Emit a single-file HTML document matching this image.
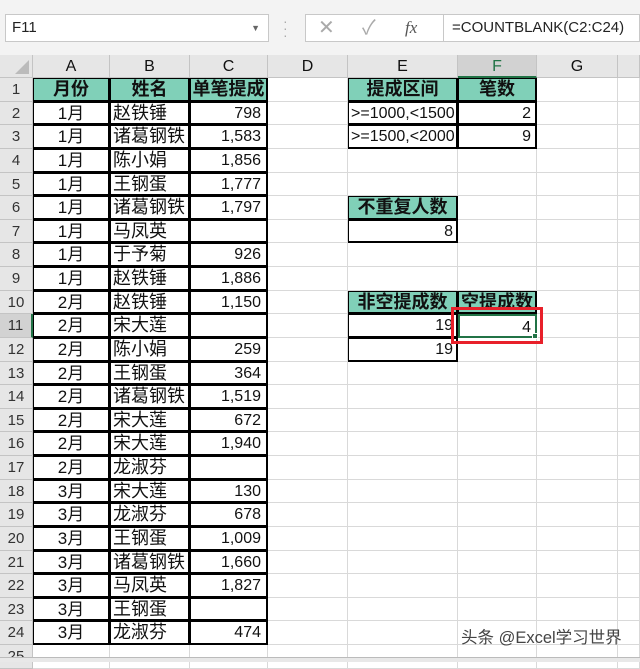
<!DOCTYPE html>
<html><head><meta charset="utf-8"><style>
*{box-sizing:border-box;margin:0;padding:0}
body{width:640px;height:662px;overflow:hidden;background:#fff;font-family:"Liberation Sans","Noto Sans CJK SC",sans-serif;position:relative}
.top{position:absolute;left:0;top:0;width:640px;height:55px;background:#f3f3f3}
.nb{position:absolute;left:5px;top:14px;width:264px;height:28px;background:#fff;border:1px solid #c8c8c8;font-size:15px;line-height:26px;padding-left:6px;color:#222}
.fb{position:absolute;left:305px;top:14px;width:330px;height:28px;background:#fff;border:1px solid #c8c8c8}
.fx{position:absolute;left:363px;top:14px;width:277px;height:28px;background:#fff;border:1px solid #c8c8c8;font-size:15px;line-height:26px;padding-left:8px;color:#222}
.r{position:absolute;left:0;height:23.625px;display:flex;width:640px}
.r>div{height:100%;border-right:1px solid #d9d9d9;border-bottom:1px solid #d9d9d9;font-size:16px;line-height:24px;white-space:nowrap;overflow:visible;color:#111}
.r>div:nth-child(1){width:33px;background:#e6e6e6;border-color:#c4c4c4;text-align:center;font-size:15px;color:#333}
.r>div:nth-child(2){width:77px;text-align:center;font-size:17px;line-height:23px}
.r>div:nth-child(3){width:80px;padding-left:3px;font-size:18px;line-height:23px}
.r>div:nth-child(4){width:78px;text-align:right;padding-right:6px}
.r>div:nth-child(5){width:80px}
.r>div:nth-child(6){width:110px;text-align:right;padding-right:4px}
.r>div:nth-child(7){width:79px;text-align:right;padding-right:5px}
.r>div:nth-child(8){width:81px}
.r>div:nth-child(9){width:22px}
.r>div.b{box-shadow:inset 0 0 0 1px #000;border-color:#000}
.r>div.h{background:#80d0b8;font-weight:bold;text-align:center;padding:0;font-size:18px;line-height:23px}
.r>div.l{text-align:left;padding-left:3px}
.ch>div{background:#e6e6e6;text-align:center!important;padding:0!important;font-size:16px!important;border-color:#c4c4c4}
</style></head><body>
<div class="top"></div>
<div class="nb">F11<span style="position:absolute;right:8px;top:0;font-size:9px;color:#666">▼</span></div>
<div style="position:absolute;left:283px;top:18px;color:#aaa;font-size:14px;line-height:7px">·<br>·<br>·</div>
<div class="fb"></div>
<div style="position:absolute;left:318px;top:14px;font-size:20px;color:#aaa;line-height:28px">✕</div>
<div style="position:absolute;left:362px;top:14px;font-size:20px;color:#aaa;line-height:28px">✓</div>
<div style="position:absolute;left:405px;top:14px;font-size:17px;color:#555;line-height:28px;font-family:'Liberation Serif',serif;font-style:italic">fx</div>
<div class="fx" style="left:443px;width:197px">=COUNTBLANK(C2:C24)</div>

<div class="r ch" style="top:55px;height:23px"><div style="position:relative"><span style="position:absolute;right:3px;bottom:3px;width:0;height:0;border-left:14px solid transparent;border-bottom:14px solid #bbb"></span></div><div>A</div><div>B</div><div>C</div><div>D</div><div>E</div><div style="background:#d2d2d2;border-bottom:2px solid #217346;color:#217346">F</div><div>G</div><div></div></div>

<div class="r" style="top:78px"><div>1</div><div class="b h">月份</div><div class="b h">姓名</div><div class="b h">单笔提成</div><div></div><div class="b h">提成区间</div><div class="b h">笔数</div><div></div><div></div></div>
<div class="r" style="top:101.6px"><div>2</div><div class="b">1月</div><div class="b">赵铁锤</div><div class="b">798</div><div></div><div class="b l">&gt;=1000,&lt;1500</div><div class="b">2</div><div></div><div></div></div>
<div class="r" style="top:125.25px"><div>3</div><div class="b">1月</div><div class="b">诸葛钢铁</div><div class="b">1,583</div><div></div><div class="b l">&gt;=1500,&lt;2000</div><div class="b">9</div><div></div><div></div></div>
<div class="r" style="top:148.9px"><div>4</div><div class="b">1月</div><div class="b">陈小娟</div><div class="b">1,856</div><div></div><div></div><div></div><div></div><div></div></div>
<div class="r" style="top:172.5px"><div>5</div><div class="b">1月</div><div class="b">王钢蛋</div><div class="b">1,777</div><div></div><div></div><div></div><div></div><div></div></div>
<div class="r" style="top:196.1px"><div>6</div><div class="b">1月</div><div class="b">诸葛钢铁</div><div class="b">1,797</div><div></div><div class="b h">不重复人数</div><div></div><div></div><div></div></div>
<div class="r" style="top:219.75px"><div>7</div><div class="b">1月</div><div class="b">马凤英</div><div class="b"></div><div></div><div class="b">8</div><div></div><div></div><div></div></div>
<div class="r" style="top:243.4px"><div>8</div><div class="b">1月</div><div class="b">于予菊</div><div class="b">926</div><div></div><div></div><div></div><div></div><div></div></div>
<div class="r" style="top:267px"><div>9</div><div class="b">1月</div><div class="b">赵铁锤</div><div class="b">1,886</div><div></div><div></div><div></div><div></div><div></div></div>
<div class="r" style="top:290.6px"><div>10</div><div class="b">2月</div><div class="b">赵铁锤</div><div class="b">1,150</div><div></div><div class="b h">非空提成数</div><div class="b h">空提成数</div><div></div><div></div></div>
<div class="r" style="top:314.25px"><div style="background:#d2d2d2;border-right:2px solid #217346">11</div><div class="b">2月</div><div class="b">宋大莲</div><div class="b"></div><div></div><div class="b">19</div><div style="border:2px solid #217346;padding-right:4px">4</div><div></div><div></div></div>
<div class="r" style="top:337.9px"><div>12</div><div class="b">2月</div><div class="b">陈小娟</div><div class="b">259</div><div></div><div class="b">19</div><div></div><div></div><div></div></div>
<div class="r" style="top:361.5px"><div>13</div><div class="b">2月</div><div class="b">王钢蛋</div><div class="b">364</div><div></div><div></div><div></div><div></div><div></div></div>
<div class="r" style="top:385.1px"><div>14</div><div class="b">2月</div><div class="b">诸葛钢铁</div><div class="b">1,519</div><div></div><div></div><div></div><div></div><div></div></div>
<div class="r" style="top:408.75px"><div>15</div><div class="b">2月</div><div class="b">宋大莲</div><div class="b">672</div><div></div><div></div><div></div><div></div><div></div></div>
<div class="r" style="top:432.4px"><div>16</div><div class="b">2月</div><div class="b">宋大莲</div><div class="b">1,940</div><div></div><div></div><div></div><div></div><div></div></div>
<div class="r" style="top:456px"><div>17</div><div class="b">2月</div><div class="b">龙淑芬</div><div class="b"></div><div></div><div></div><div></div><div></div><div></div></div>
<div class="r" style="top:479.6px"><div>18</div><div class="b">3月</div><div class="b">宋大莲</div><div class="b">130</div><div></div><div></div><div></div><div></div><div></div></div>
<div class="r" style="top:503.25px"><div>19</div><div class="b">3月</div><div class="b">龙淑芬</div><div class="b">678</div><div></div><div></div><div></div><div></div><div></div></div>
<div class="r" style="top:526.9px"><div>20</div><div class="b">3月</div><div class="b">王钢蛋</div><div class="b">1,009</div><div></div><div></div><div></div><div></div><div></div></div>
<div class="r" style="top:550.5px"><div>21</div><div class="b">3月</div><div class="b">诸葛钢铁</div><div class="b">1,660</div><div></div><div></div><div></div><div></div><div></div></div>
<div class="r" style="top:574.1px"><div>22</div><div class="b">3月</div><div class="b">马凤英</div><div class="b">1,827</div><div></div><div></div><div></div><div></div><div></div></div>
<div class="r" style="top:597.75px"><div>23</div><div class="b">3月</div><div class="b">王钢蛋</div><div class="b"></div><div></div><div></div><div></div><div></div><div></div></div>
<div class="r" style="top:621.4px"><div>24</div><div class="b">3月</div><div class="b">龙淑芬</div><div class="b">474</div><div></div><div></div><div></div><div></div><div></div></div>
<div class="r" style="top:645px"><div>25</div><div></div><div></div><div></div><div></div><div></div><div></div><div></div><div></div></div>
<div style="position:absolute;left:0;top:657px;width:640px;height:5px;background:#e8e8e8;border-top:1px solid #bbb"></div>
<div style="position:absolute;left:451px;top:307px;width:92px;height:37px;border:3px solid #e8202a"></div>
<div style="position:absolute;left:532px;top:333px;width:6px;height:6px;background:#217346;border:1px solid #fff"></div>
<div style="position:absolute;left:461px;top:624px;font-size:16.5px;color:#444;font-family:'Liberation Sans','Noto Sans CJK SC',sans-serif">头条 @Excel学习世界</div>
</body></html>
